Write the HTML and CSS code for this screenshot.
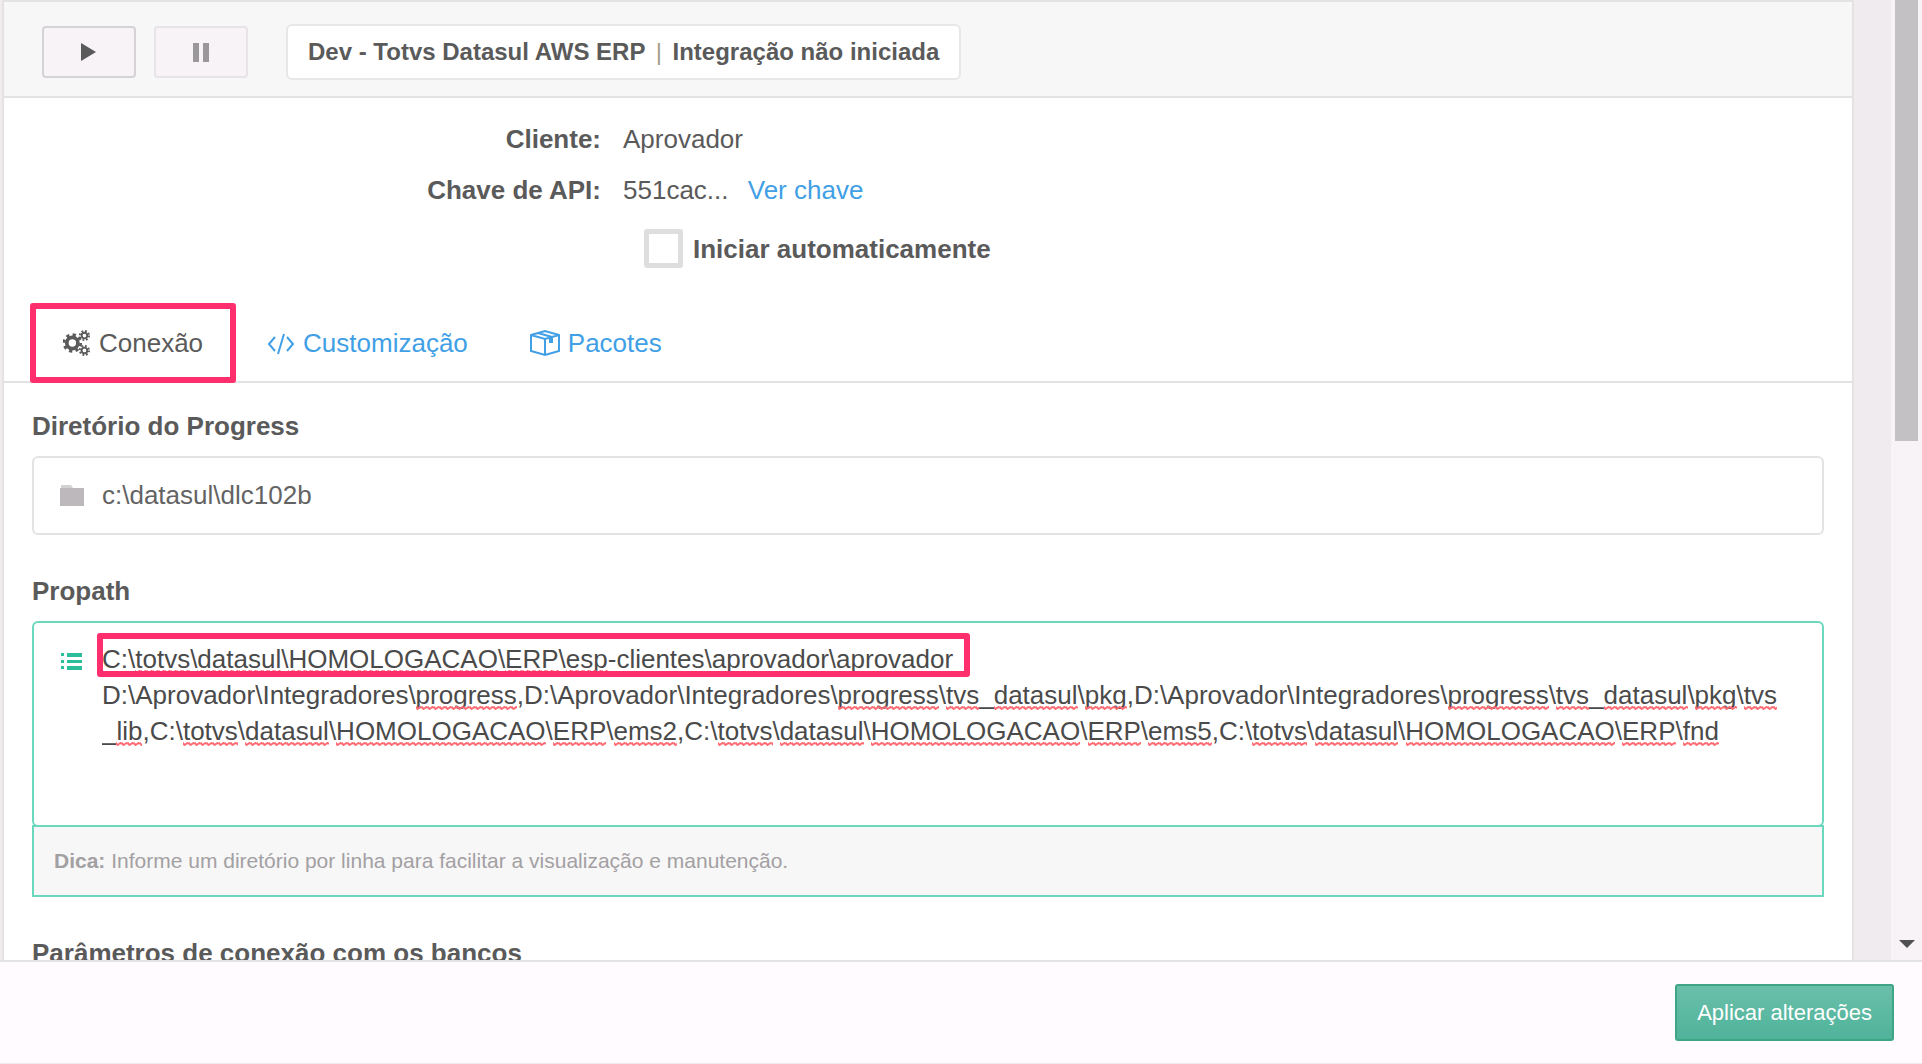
FILE: index.html
```html
<!DOCTYPE html>
<html lang="pt-BR">
<head>
<meta charset="utf-8">
<title>Integração</title>
<link rel="stylesheet" href="styles.css">
</head>
<body>
<div class="app">
  <div class="viewport">
    <main class="panel">
      <header class="toolbar">
        <button class="tool" type="button" aria-label="Iniciar">
          <svg width="16" height="24" viewBox="0 0 16 24" aria-hidden="true"><path d="M0 3 15 12 0 21z" fill="currentColor"/></svg>
        </button>
        <button class="tool" type="button" aria-label="Pausar" disabled>
          <svg width="16" height="24" viewBox="0 0 16 24" aria-hidden="true"><path d="M0 3h6v19H0zM10 3h6v19h-6z" fill="currentColor"/></svg>
        </button>
        <h1 class="status">Dev - Totvs Datasul AWS ERP <span class="divider">|</span> Integração não iniciada</h1>
      </header>

      <section class="summary">
        <dl class="facts">
          <dt>Cliente:</dt>
          <dd>Aprovador</dd>
          <dt>Chave de API:</dt>
          <dd>551cac... <a class="reveal" href="#chave">Ver chave</a></dd>
        </dl>
        <div class="autostart">
          <input class="check" type="checkbox" id="autostart">
          <label for="autostart">Iniciar automaticamente</label>
        </div>
      </section>

      <nav class="tabs">
        <a class="tab active" href="#conexao">
          <svg width="28" height="26" viewBox="0 0 30 28" aria-hidden="true" fill="none" stroke="currentColor">
            <circle cx="10" cy="14" r="6" stroke-width="4"/>
            <circle cx="10" cy="14" r="9" stroke-width="3" stroke-dasharray="3.5 3.57"/>
            <circle cx="23" cy="6" r="3" stroke-width="2"/>
            <circle cx="23" cy="6" r="5" stroke-width="2" stroke-dasharray="2 1.93"/>
            <circle cx="23" cy="22" r="3" stroke-width="2"/>
            <circle cx="23" cy="22" r="5" stroke-width="2" stroke-dasharray="2 1.93"/>
          </svg>
          Conexão
        </a>
        <a class="tab" href="#customizacao">
          <svg width="28" height="28" viewBox="0 0 28 28" aria-hidden="true" fill="none" stroke="currentColor" stroke-width="2"><path d="M8 8 2 15l6 7M20 8l6 7-6 7M17 5l-6 20"/></svg>
          Customização
        </a>
        <a class="tab" href="#pacotes">
          <svg width="30" height="28" viewBox="0 0 30 28" aria-hidden="true" fill="none" stroke="currentColor" stroke-width="2"><path d="M1 6 15 2l14 4v16l-14 4-14-4zM1 6l14 4 14-4M15 10v16M8 4l14 4"/><path d="M21 9v5" stroke-width="4"/></svg>
          Pacotes
        </a>
      </nav>

      <form class="form" id="conexao">
        <div class="field">
          <label class="caption" for="progress">Diretório do Progress</label>
          <div class="box">
            <svg class="icon" width="24" height="24" viewBox="0 0 24 24" aria-hidden="true"><path d="M1 1h10l2 3H1z" fill="#d4d1d4"/><path d="M0 4h24v18H0z" fill="#bcb8bc"/></svg>
            <input class="text" id="progress" type="text" value="c:\datasul\dlc102b">
          </div>
        </div>
        <div class="field">
          <label class="caption" for="propath">Propath</label>
          <div class="box area">
            <svg class="icon" width="24" height="24" viewBox="0 0 24 24" aria-hidden="true" fill="#2cbd9a"><path d="M1 4h3v3H1zM7 4h15v4H7zM1 11h3v3H1zM7 11h15v3H7zM1 17h3v3H1zM7 17h15v4H7z"/></svg>
            <div class="editor">
              <textarea class="text" id="propath" spellcheck="false">C:\totvs\datasul\HOMOLOGACAO\ERP\esp-clientes\aprovador\aprovador
D:\Aprovador\Integradores\progress,D:\Aprovador\Integradores\progress\tvs_datasul\pkg,D:\Aprovador\Integradores\progress\tvs_datasul\pkg\tvs_lib,C:\totvs\datasul\HOMOLOGACAO\ERP\ems2,C:\totvs\datasul\HOMOLOGACAO\ERP\ems5,C:\totvs\datasul\HOMOLOGACAO\ERP\fnd</textarea>
              <div class="marks" aria-hidden="true"></div>
            </div>
          </div>
          <p class="hint"><strong>Dica:</strong> Informe um diretório por linha para facilitar a visualização e manutenção.</p>
        </div>
        <div class="field">
          <label class="caption" for="params">Parâmetros de conexão com os bancos</label>
          <div class="box"><input class="text" id="params" type="text"></div>
        </div>
      </form>
    </main>
    <div class="scrollbar">
      <div class="thumb"></div>
      <svg class="arrow" width="16" height="8" viewBox="0 0 16 8" aria-hidden="true"><path d="M0 0h16L8 8z" fill="#505050"/></svg>
    </div>
  </div>
  <footer class="actions">
    <button class="apply" type="submit" form="conexao">Aplicar alterações</button>
  </footer>
</div>
<script src="marks.js"></script>
</body>
</html>
```
FILE: styles.css
```css
* { box-sizing: border-box; }

body {
  margin: 0;
  background: #fffbff;
  color: #5a5a5a;
  font: 26px/36px "Liberation Sans", Arial, sans-serif;
}

a { color: #419fe6; text-decoration: none; }

.app {
  display: flex;
  flex-direction: column;
  height: 100vh;
  border-bottom: 1px solid #ececec;
}

.viewport {
  display: flex;
  flex: 1;
  min-height: 0;
  padding-left: 2px;
  overflow: hidden;
  background: #efebef;
}

.panel {
  flex: 1;
  align-self: flex-start;
  min-width: 0;
  margin-right: 37px;
  border: 2px solid #e3e3e3;
  background: #fff;
}

.toolbar {
  display: flex;
  align-items: center;
  height: 96px;
  padding: 6px 38px 0;
  border-bottom: 2px solid #e3e3e3;
  background: #f7f7f7;
}

.tool {
  display: flex;
  align-items: center;
  justify-content: center;
  width: 94px;
  height: 52px;
  margin-right: 18px;
  padding: 0;
  border: 2px solid #d6d3d6;
  border-radius: 4px;
  background: #f7f3f7;
  color: #5a5a5a;
}

.tool:disabled { border-color: #e7e3e7; color: #9a989a; }

.status {
  margin: 0 0 0 20px;
  padding: 8px 20px;
  border: 2px solid #e7e7e7;
  border-radius: 6px;
  background: #fff;
  font-size: 24px;
  line-height: 36px;
}

.divider { margin: 0 4px; color: #a3a08a; font-weight: normal; }

.summary { padding-top: 23px; }

.facts {
  display: grid;
  grid-template-columns: 597px 1fr;
  gap: 15px 22px;
  margin: 0;
}

.facts dt { font-weight: bold; text-align: right; }
.facts dd { margin: 0; }
.reveal { margin-left: 12px; }

.autostart {
  display: flex;
  align-items: center;
  gap: 10px;
  padding: 21px 0 0 640px;
  font-weight: bold;
}

.check {
  appearance: none;
  width: 39px;
  height: 39px;
  margin: 0;
  border: 5px solid #dedede;
  border-radius: 3px;
  background: #fff;
}

.tabs {
  display: flex;
  align-items: flex-end;
  margin-top: 35px;
  padding-left: 26px;
  border-bottom: 2px solid #e3e3e3;
}

.tab {
  display: flex;
  align-items: center;
  gap: 8px;
  height: 78px;
  padding: 2px 31px 0;
}

.active {
  height: 80px;
  margin-bottom: -2px;
  border: 6px solid #ff2f6e;
  border-radius: 3px;
  padding: 0 27px;
  color: #5a5a5a;
}

.form { padding: 25px 28px; }
.field { margin-bottom: 38px; }

.caption { display: block; margin-bottom: 12px; font-weight: bold; }

.box {
  display: flex;
  align-items: center;
  gap: 18px;
  padding: 19px 34px 19px 26px;
  border: 2px solid #e3e3e3;
  border-radius: 6px;
  background: #fff;
}

.icon { flex: none; }

.text {
  display: block;
  flex: 1;
  width: 100%;
  height: 37px;
  padding: 0;
  border: 0;
  outline: 0;
  background: none;
  color: #636363;
  font: inherit;
  resize: none;
}

.area {
  align-items: flex-start;
  padding-top: 18px;
  border-color: #6bd7bd;
}
.area .icon { margin-top: 8px; }
.area .text { height: 165px; overflow: hidden; color: #4a4a4a; overflow-wrap: anywhere; }

.editor { position: relative; flex: 1; min-width: 0; }

.marks {
  position: absolute;
  inset: 0;
  color: transparent;
  overflow-wrap: anywhere;
  white-space: pre-wrap;
  pointer-events: none;
}

.misspelt {
  background: url("data:image/svg+xml,%3Csvg xmlns='http://www.w3.org/2000/svg' width='6' height='4'%3E%3Cpath d='M-1 0 1.500 3 4.500 1 6 2' fill='none' stroke='%23ff6b73' stroke-width='2'/%3E%3C/svg%3E") repeat-x left bottom;
}

.highlight { position: relative; }

.highlight::after {
  content: "";
  position: absolute;
  inset: -11px -17px -3px -5px;
  border: 6px solid #ff2f6e;
  border-radius: 3px;
}

.hint {
  position: relative;
  margin: -2px 0 0;
  padding: 16px 20px;
  border: 2px solid #6bd7bd;
  background: #f7f7f7;
  color: #a3a0a3;
  font-size: 21px;
}

.scrollbar {
  display: flex;
  flex-direction: column;
  align-items: center;
  justify-content: space-between;
  width: 31px;
  padding-bottom: 12px;
  background: #f7f3f7;
}

.thumb { width: 23px; height: 46.5%; background: #c3c1c3; }

.actions {
  display: flex;
  justify-content: flex-end;
  padding: 22px 28px;
  border-top: 2px solid #e3e3e3;
}

.apply {
  height: 57px;
  padding: 0 20px;
  border: 2px solid #3fa587;
  border-radius: 3px;
  background: linear-gradient(#6bbfaa, #4fb39a);
  color: #fff;
  font: inherit;
  font-size: 22px;
}
```
FILE: marks.js
```js
// Rebuilds the spelling marks that lie over the Propath editor.
const known = /^(C|D|Aprovador|Integradores|aprovador|clientes)$/;
const editor = document.getElementById("propath");
const marks = document.querySelector(".marks");

function draw() {
  marks.replaceChildren();
  editor.value.split("\n").forEach((line, index) => {
    const row = document.createElement("span");
    if (index === 0) row.className = "highlight";
    for (const part of line.split(/([A-Za-z0-9]+)/)) {
      const word = document.createElement("span");
      word.textContent = part;
      if (/[A-Za-z0-9]/.test(part) && !known.test(part)) word.className = "misspelt";
      row.append(word);
    }
    marks.append(row, "\n");
  });
}

editor.addEventListener("input", draw);
draw();
```
